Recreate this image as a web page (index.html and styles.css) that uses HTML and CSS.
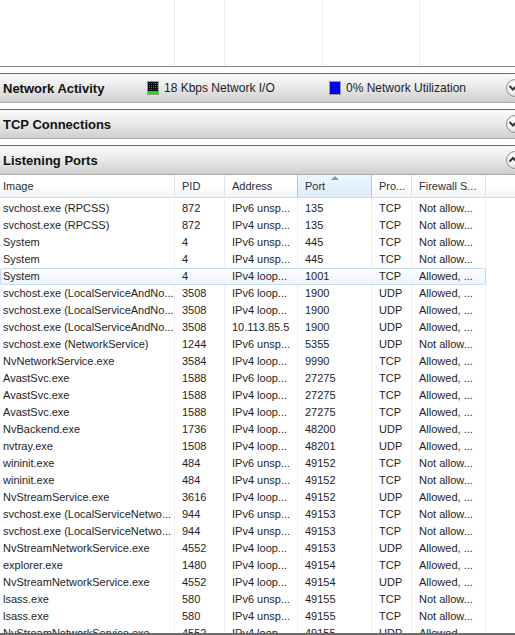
FILE: index.html
```html
<!DOCTYPE html>
<html>
    <head>
        <title>Resource Monitor - Network</title>
        <link rel="stylesheet" href="styles.css">
    </head>
    <body>
        <div class="monitor">
            <!-- chart grid area above the sections -->
            <div class="top-pane">
                <div class="grid-col" style="width:175px"></div>
                <div class="grid-col" style="width:50px"></div>
                <div class="grid-col" style="width:98px"></div>
                <div class="grid-col" style="width:97px"></div>
                <div class="grid-col last"></div>
            </div>

            <!-- Network Activity -->
            <div class="section-header">
                <span class="section-title wide">Network Activity</span>
                <span class="stat io">
                    <svg class="meter" width="12" height="14" viewBox="0 0 12 14">
                        <defs>
                            <pattern id="gdots" width="2" height="2" patternUnits="userSpaceOnUse">
                                <rect width="2" height="2" fill="#000"/>
                                <rect width="1" height="1" fill="#0a9a0a"/>
                            </pattern>
                        </defs>
                        <rect x="0.5" y="0.5" width="11" height="13" fill="#fff" stroke="#9a9a9a"/>
                        <rect x="1" y="1" width="10" height="9" fill="url(#gdots)"/>
                        <rect x="1" y="10" width="10" height="3" fill="#00ee00"/>
                    </svg>
                    18 Kbps Network I/O
                </span>
                <span class="stat">
                    <svg class="meter" width="12" height="14" viewBox="0 0 12 14">
                        <defs>
                            <pattern id="bdots" width="2" height="2" patternUnits="userSpaceOnUse">
                                <rect width="2" height="2" fill="#0000f0"/>
                                <rect width="1" height="1" fill="#000060"/>
                            </pattern>
                        </defs>
                        <rect x="0.5" y="0.5" width="11" height="13" fill="#fff" stroke="#9a9a9a"/>
                        <rect x="1" y="1" width="10" height="12" fill="url(#bdots)"/>
                    </svg>
                    0% Network Utilization
                </span>
                <span class="toggle-btn">
                    <svg width="18" height="18" viewBox="0 0 18 18"><path d="M4.5 7 L8 10.5 L11.5 7" fill="none" stroke="#333" stroke-width="2"/></svg>
                </span>
            </div>

            <!-- TCP Connections -->
            <div class="section-header">
                <span class="section-title">TCP Connections</span>
                <span class="toggle-btn">
                    <svg width="18" height="18" viewBox="0 0 18 18"><path d="M4.5 7 L8 10.5 L11.5 7" fill="none" stroke="#333" stroke-width="2"/></svg>
                </span>
            </div>

            <!-- Listening Ports -->
            <div class="section-header">
                <span class="section-title">Listening Ports</span>
                <span class="toggle-btn">
                    <svg width="18" height="18" viewBox="0 0 18 18"><path d="M4.5 10.5 L8 7 L11.5 10.5" fill="none" stroke="#333" stroke-width="2"/></svg>
                </span>
            </div>

            <div class="list-view">
                <div class="list-header">
                    <div class="col-head first">Image</div>
                    <div class="col-head">PID</div>
                    <div class="col-head">Address</div>
                    <div class="col-head sorted">Port<span class="sort-arrow"></span></div>
                    <div class="col-head">Pro...</div>
                    <div class="col-head">Firewall S...</div>
                    <div class="col-head filler"></div>
                </div>
                <div class="list-body" id="portRows"></div>
            </div>
            <div class="bottom-edge"></div>
        </div>

        <script>
            // listening ports: image, pid, address, port, protocol, firewall
            var ports = [
                ["svchost.exe (RPCSS)", "872", "IPv6 unsp...", "135", "TCP", "Not allow..."],
                ["svchost.exe (RPCSS)", "872", "IPv4 unsp...", "135", "TCP", "Not allow..."],
                ["System", "4", "IPv6 unsp...", "445", "TCP", "Not allow..."],
                ["System", "4", "IPv4 unsp...", "445", "TCP", "Not allow..."],
                ["System", "4", "IPv4 loop...", "1001", "TCP", "Allowed, ..."],
                ["svchost.exe (LocalServiceAndNo...", "3508", "IPv6 loop...", "1900", "UDP", "Allowed, ..."],
                ["svchost.exe (LocalServiceAndNo...", "3508", "IPv4 loop...", "1900", "UDP", "Allowed, ..."],
                ["svchost.exe (LocalServiceAndNo...", "3508", "10.113.85.5", "1900", "UDP", "Allowed, ..."],
                ["svchost.exe (NetworkService)", "1244", "IPv6 unsp...", "5355", "UDP", "Not allow..."],
                ["NvNetworkService.exe", "3584", "IPv4 loop...", "9990", "TCP", "Allowed, ..."],
                ["AvastSvc.exe", "1588", "IPv6 loop...", "27275", "TCP", "Allowed, ..."],
                ["AvastSvc.exe", "1588", "IPv4 loop...", "27275", "TCP", "Allowed, ..."],
                ["AvastSvc.exe", "1588", "IPv4 loop...", "27275", "TCP", "Allowed, ..."],
                ["NvBackend.exe", "1736", "IPv4 loop...", "48200", "UDP", "Allowed, ..."],
                ["nvtray.exe", "1508", "IPv4 loop...", "48201", "UDP", "Allowed, ..."],
                ["wininit.exe", "484", "IPv6 unsp...", "49152", "TCP", "Not allow..."],
                ["wininit.exe", "484", "IPv4 unsp...", "49152", "TCP", "Not allow..."],
                ["NvStreamService.exe", "3616", "IPv4 loop...", "49152", "UDP", "Allowed, ..."],
                ["svchost.exe (LocalServiceNetwo...", "944", "IPv6 unsp...", "49153", "TCP", "Not allow..."],
                ["svchost.exe (LocalServiceNetwo...", "944", "IPv4 unsp...", "49153", "TCP", "Not allow..."],
                ["NvStreamNetworkService.exe", "4552", "IPv4 loop...", "49153", "UDP", "Allowed, ..."],
                ["explorer.exe", "1480", "IPv4 loop...", "49154", "TCP", "Allowed, ..."],
                ["NvStreamNetworkService.exe", "4552", "IPv4 loop...", "49154", "UDP", "Allowed, ..."],
                ["lsass.exe", "580", "IPv6 unsp...", "49155", "TCP", "Not allow..."],
                ["lsass.exe", "580", "IPv4 unsp...", "49155", "TCP", "Not allow..."],
                ["NvStreamNetworkService.exe", "4552", "IPv4 loop...", "49155", "UDP", "Allowed, ..."]
            ];

            var selectedRow = 4;

            function renderPorts() {
                var body = document.getElementById("portRows");
                for (var i = 0; i < ports.length; i++) {
                    var row = document.createElement("div");
                    row.className = "port-row";
                    if (i === selectedRow) row.classList.add("selected-row");
                    for (var j = 0; j < ports[i].length; j++) {
                        var cell = document.createElement("div");
                        cell.className = j === 0 ? "cell first" : "cell";
                        cell.textContent = ports[i][j];
                        row.appendChild(cell);
                    }
                    body.appendChild(row);
                }
            }
            renderPorts();
        </script>
    </body>
</html>
```

FILE: styles.css
```css
html, body {
    margin: 0;
    padding: 0;
    background-color: #ffffff;
}

.monitor {
    width: 515px;
    height: 635px;
    overflow: hidden;
    display: flex;
    flex-direction: column;
    font-family: "Liberation Sans", Arial, sans-serif;
    color: #1e1e1e;
}

/* grid lines of the chart area */
.top-pane {
    display: flex;
    height: 66px;
    flex-shrink: 0;
    border-bottom: 1px solid #8a8a8a;
}
.grid-col {
    height: 100%;
    border-right: 1px solid #e6edf7;
    box-sizing: border-box;
}
.grid-col.last {
    flex: 1;
    border-right: none;
}

/* collapsible section bars */
.section-header {
    display: flex;
    align-items: center;
    flex-shrink: 0;
    height: 28px;
    margin-top: 6px;
    border-top: 1px solid #6a6a6a;
    border-bottom: 1px solid #a9a9a9;
    background: linear-gradient(#fbfbfb, #eaeaea 45%, #cfcfcf);
    overflow: hidden;
}
.section-title {
    font-weight: bold;
    font-size: 13px;
    padding-left: 3px;
    color: #111;
    white-space: nowrap;
}
.section-title.wide {
    flex: 0 0 144px;
}
.stat {
    display: flex;
    align-items: center;
    flex-shrink: 0;
    font-size: 12px;
    color: #1e1e1e;
    gap: 5px;
    white-space: nowrap;
}
.stat.io {
    width: 182px;
}
.meter {
    display: block;
}
.toggle-btn {
    width: 18px;
    height: 18px;
    flex-shrink: 0;
    margin-left: auto;
    margin-right: -9px;
    border: 1px solid #8d8d8d;
    border-radius: 50%;
    background: radial-gradient(circle at 40% 35%, #ffffff, #f0f0f0 50%, #cdcdcd);
    display: flex;
    align-items: center;
    justify-content: center;
    box-sizing: border-box;
}
.toggle-btn svg {
    margin-left: -2px;
}

/* list view */
.list-view {
    flex: 1;
    overflow: hidden;
    font-size: 11px;
}
.list-header {
    display: grid;
    grid-template-columns: 175px 50px 73px 74px 40px 74px 29px;
    height: 22px;
    border-bottom: 1px solid #d8dde4;
    background: linear-gradient(#ffffff 55%, #f2f3f5);
}
.col-head {
    display: flex;
    align-items: center;
    padding-left: 7px;
    border-right: 1px solid #dfe3e8;
    color: #2a3038;
    white-space: nowrap;
    overflow: hidden;
}
.col-head.first {
    padding-left: 3px;
}
.col-head.filler {
    border-right: none;
}
.col-head.sorted {
    position: relative;
    background: linear-gradient(#eef7fe, #dcedfa);
    border-left: 1px solid #9fcbee;
    border-right: 1px solid #9fcbee;
    margin-left: -1px;
}
.sort-arrow {
    position: absolute;
    top: 1px;
    left: 33px;
    width: 0;
    height: 0;
    border-left: 4px solid transparent;
    border-right: 4px solid transparent;
    border-bottom: 4px solid #7d9ab8;
}

.list-body {
    padding-top: 2px;
}
.port-row {
    display: grid;
    grid-template-columns: 175px 50px 73px 74px 40px 74px;
    width: 486px;
    height: 17px;
    box-sizing: border-box;
}
.cell {
    padding-left: 7px;
    line-height: 17px;
    white-space: nowrap;
    overflow: hidden;
    border-right: 1px solid #edf0f4;
}
.cell.first {
    padding-left: 3px;
}
.selected-row {
    grid-template-columns: 174px 50px 73px 74px 40px 73px;
    border: 1px solid #c6dcf2;
    border-radius: 2px;
    background: linear-gradient(#fbfdff, #eef5fc);
}
.selected-row .cell {
    border-right-color: transparent;
    line-height: 15px;
}
.selected-row .cell.first {
    padding-left: 2px;
}

.bottom-edge {
    height: 2px;
    flex-shrink: 0;
    background-color: #6e6e6e;
}
```
